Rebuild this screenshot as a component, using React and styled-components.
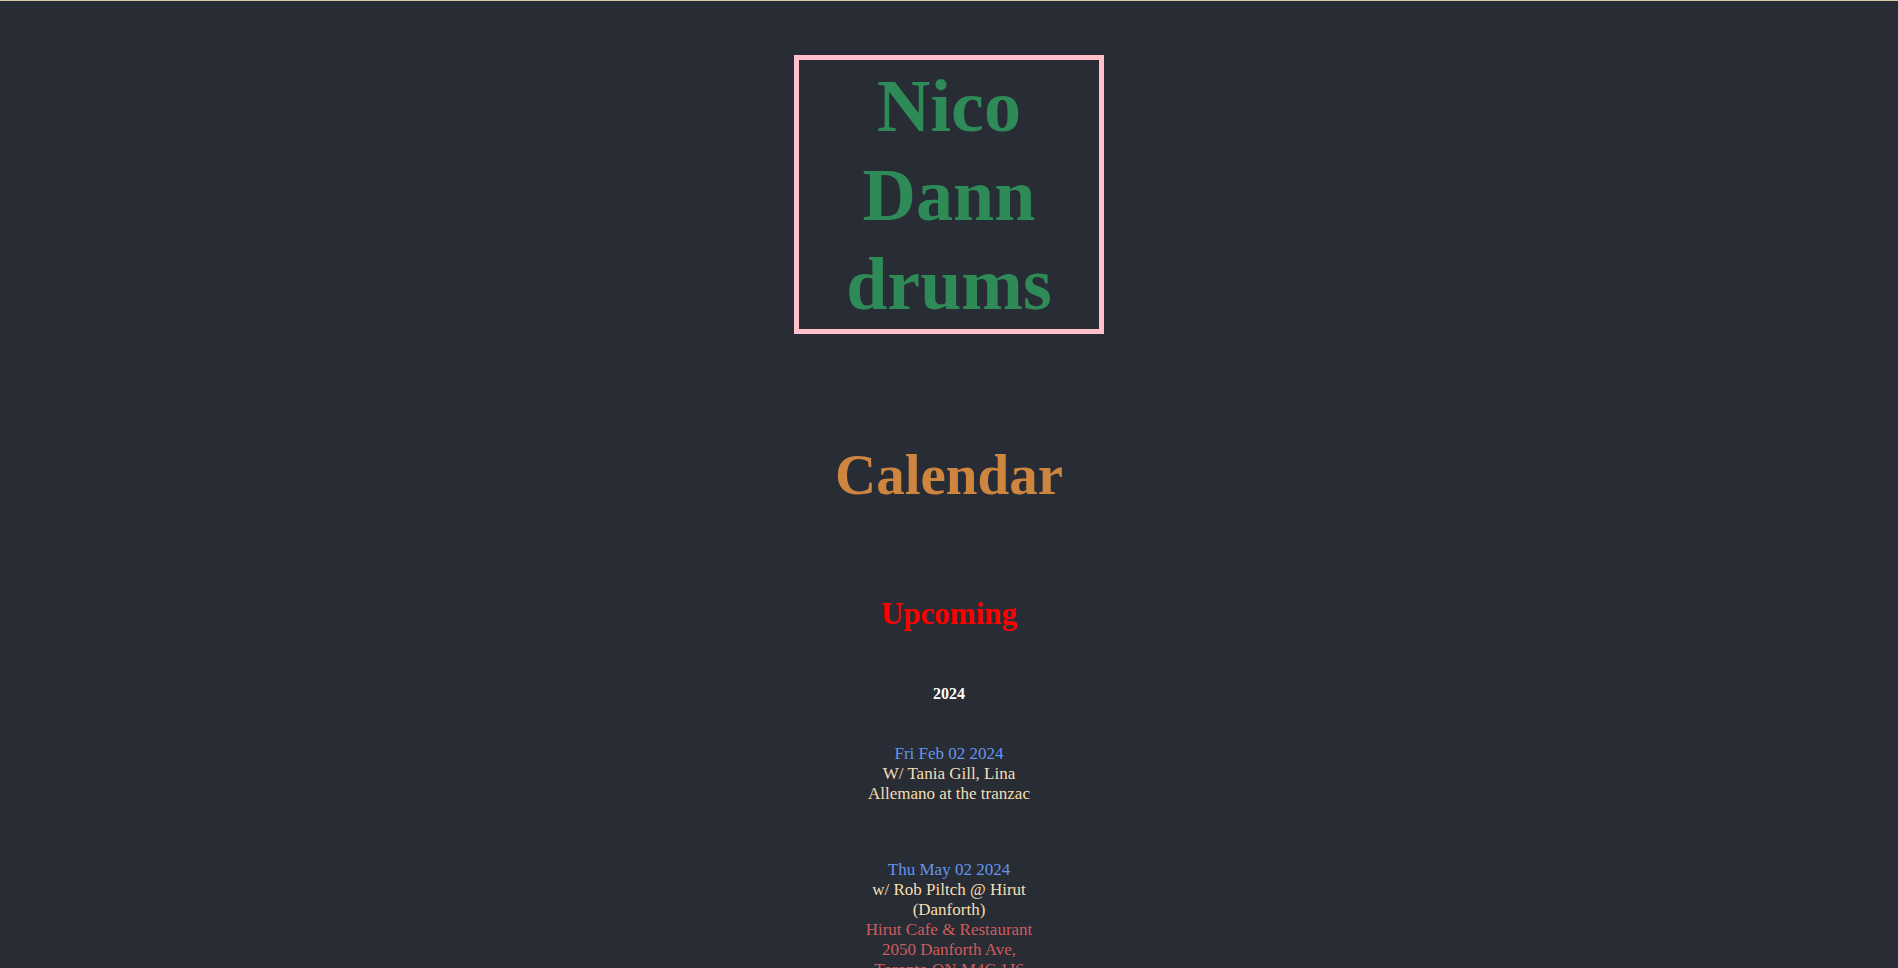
import React from 'react';
import styled, { createGlobalStyle } from 'styled-components';

const GlobalStyle = createGlobalStyle`
  html, body {
    margin: 0;
    padding: 0;
    background: #282c34;
  }
`;

// Estilos principales
const Page = styled.div`
  display: flex;
  flex-direction: column;
  align-items: center;
  min-height: 100vh;
  background: #282c34;
  border-top: 1px solid #d6cba6;
  font-family: 'Liberation Serif', 'Times New Roman', serif;
  text-align: center;
`;

const NameBox = styled.div`
  width: 300px;
  margin-top: 54px;
  padding: 2px 0 0;
  border: 5px solid pink;
`;

const Name = styled.h1`
  margin: 0;
  font-size: 74px;
  line-height: 89px;
  font-weight: bold;
  color: #2e8b57;
`;

const SectionTitle = styled.h2`
  margin: 108px 0 0;
  font-size: 57px;
  line-height: 66px;
  font-weight: bold;
  color: #cd853f;
`;

const SubTitle = styled.h3`
  margin: 88px 0 0;
  font-size: 31px;
  line-height: 36px;
  font-weight: bold;
  color: #ff0000;
`;

const Year = styled.h4`
  margin: 52px 0 0;
  font-size: 16px;
  line-height: 20px;
  font-weight: bold;
  color: #ffffff;
`;

const EventList = styled.div`
  display: flex;
  flex-direction: column;
  gap: 56px;
  width: 178px;
  margin-top: 40px;
  padding-bottom: 60px;
`;

const Event = styled.div`
  display: flex;
  flex-direction: column;
  font-size: 17px;
  line-height: 20px;
`;

const EventDate = styled.span`
  color: #6495ed;
`;

const EventText = styled.span`
  color: #f5deb3;
`;

const EventPlace = styled.span`
  color: #cd5c5c;
`;

const events = [
  {
    date: 'Fri Feb 02 2024',
    text: 'W/ Tania Gill, Lina Allemano at the tranzac',
  },
  {
    date: 'Thu May 02 2024',
    text: 'w/ Rob Piltch @ Hirut (Danforth)',
    place: ['Hirut Cafe & Restaurant', '2050 Danforth Ave, Toronto ON M4C 1J6'],
  },
];

const App = () => {
  return (
    <>
      <GlobalStyle />
      <Page>
        <NameBox>
          <Name>Nico Dann drums</Name>
        </NameBox>
        <SectionTitle>Calendar</SectionTitle>
        <SubTitle>Upcoming</SubTitle>
        <Year>2024</Year>
        <EventList>
          {events.map((ev, index) => (
            <Event key={index}>
              <EventDate>{ev.date}</EventDate>
              <EventText>{ev.text}</EventText>
              {ev.place &&
                ev.place.map((line, i) => <EventPlace key={i}>{line}</EventPlace>)}
            </Event>
          ))}
        </EventList>
      </Page>
    </>
  );
};

export default App;
